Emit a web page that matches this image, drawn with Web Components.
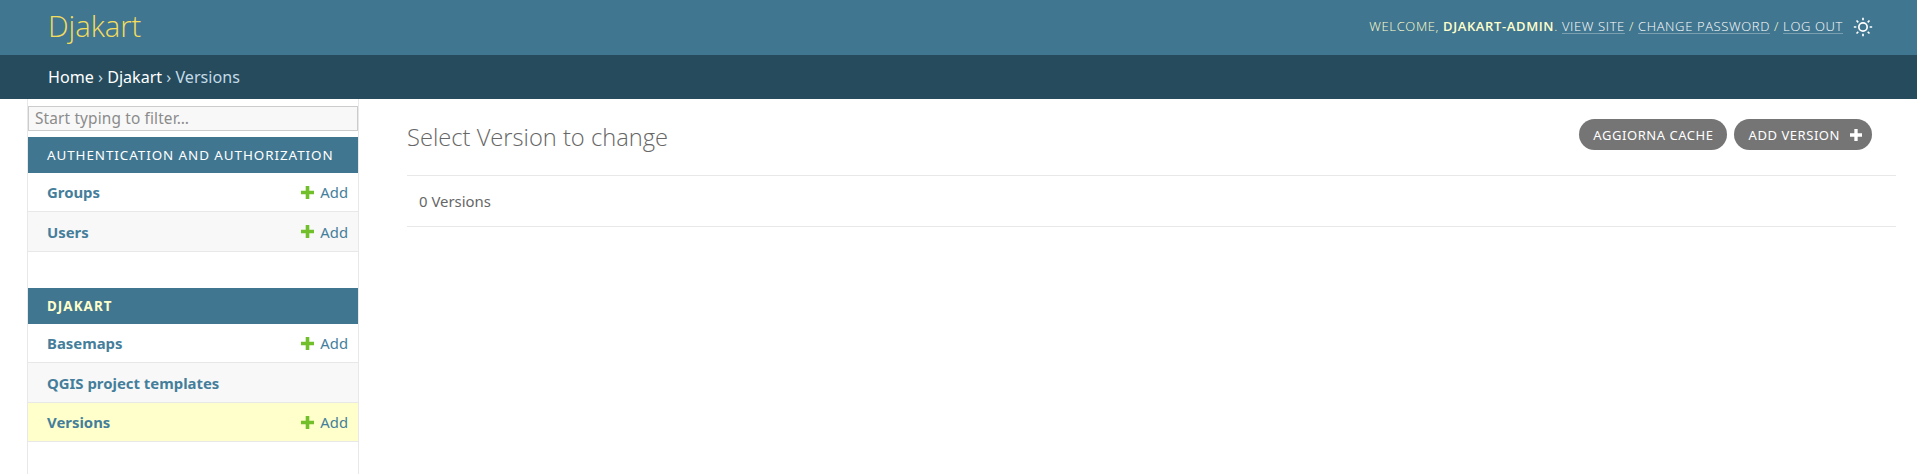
<!DOCTYPE html>
<html lang="en">
<head>
<meta charset="utf-8">
<title>Select Version to change</title>
<style>
  html, body { margin: 0; padding: 0; background: #fff; }
  body { font-family: "Noto Sans", "Open Sans", sans-serif; color: #333; height: 474px; overflow: hidden; }
</style>
</head>
<body>
<site-header brand="Djakart">
  <span>Welcome, <strong>djakart-admin</strong>.</span>
  <a href="#">View site</a> / <a href="#">Change password</a> / <a href="#">Log out</a>
</site-header>
<bread-crumbs><a href="#">Home</a> › <a href="#">Djakart</a> › Versions</bread-crumbs>
<admin-main>
  <nav-sidebar slot="side">
    <app-module caption="Authentication and Authorization">
      <model-row add>Groups</model-row>
      <model-row add alt>Users</model-row>
    </app-module>
    <app-module caption="Djakart" current>
      <model-row add>Basemaps</model-row>
      <model-row alt>QGIS project templates</model-row>
      <model-row add current>Versions</model-row>
    </app-module>
  </nav-sidebar>
  <change-list title-text="Select Version to change" count="0 Versions">
    <tool-button slot="tools">Aggiorna cache</tool-button>
    <tool-button slot="tools" plus>Add Version</tool-button>
  </change-list>
</admin-main>

<script>
// small helper, every element gets an open shadow root
function shadow(el, html) {
  const root = el.attachShadow({ mode: 'open' });
  root.innerHTML = html;
  return root;
}

const PLUS = `<svg width="13" height="13" viewBox="0 0 13 13" aria-hidden="true"><path fill="currentColor" d="M4.7 0h3.6v4.7H13v3.6H8.3V13H4.7V8.3H0V4.7h4.7z"/></svg>`;

class SiteHeader extends HTMLElement {
  connectedCallback() {
    shadow(this, `
      <style>
        :host { display: flex; justify-content: space-between; align-items: center; box-sizing: border-box; height: 55px; padding: 0 44px 0 48px; background: #417690; }
        .brand { font-family: "Open Sans", sans-serif; font-size: 29.2px; font-weight: 300; color: #f5dd5d; line-height: 1; position: relative; top: -1px; }
        .tools { display: flex; align-items: center; font-family: "Open Sans", sans-serif; font-size: 13px; font-weight: 300; letter-spacing: .63px; text-transform: uppercase; color: #ffc; }
        .text { margin-bottom: 3px; }
        .sun { width: 20px; height: 20px; margin: -1px 0 0 10px; color: #fff; display: block; }
      </style>
      <div class="brand">${this.getAttribute('brand')}</div>
      <div class="tools">
        <span class="text"><slot></slot></span>
        <svg class="sun" viewBox="0 0 24 24" aria-hidden="true"><path fill="currentColor" d="M12 18a6 6 0 1 1 0-12 6 6 0 0 1 0 12zm0-2a4 4 0 1 0 0-8 4 4 0 0 0 0 8zM11 1h2v3h-2V1zm0 19h2v3h-2v-3zM3.515 4.929l1.414-1.414L7.05 5.636 5.636 7.05 3.515 4.93zM16.95 18.364l1.414-1.414 2.121 2.121-1.414 1.414-2.121-2.121zm2.121-14.85l1.414 1.415-2.121 2.121-1.414-1.414 2.121-2.121zM5.636 16.95l1.414 1.414-2.121 2.121-1.414-1.414 2.121-2.121zM23 11v2h-3v-2h3zM4 11v2H1v-2h3z"/></svg>
      </div>
    `);
    for (const a of this.querySelectorAll('a')) {
      a.style.cssText = 'color:#fff;text-decoration:underline;text-decoration-color:rgba(255,255,255,.3);text-decoration-thickness:1px;text-underline-offset:2px;text-decoration-skip-ink:none';
    }
    this.querySelector('strong').style.cssText = 'font-weight:600';
  }
}
customElements.define('site-header', SiteHeader);

class BreadCrumbs extends HTMLElement {
  connectedCallback() {
    shadow(this, `
      <style>
        :host { display: flex; align-items: center; box-sizing: border-box; height: 44px; padding-left: 48px; background: #264b5d; color: #c4dce8; font-size: 16.1px; }
      </style>
      <div><slot></slot></div>
    `);
    for (const a of this.querySelectorAll('a')) {
      a.style.cssText = 'color:#fff;text-decoration:none';
    }
  }
}
customElements.define('bread-crumbs', BreadCrumbs);

class AdminMain extends HTMLElement {
  connectedCallback() {
    shadow(this, `
      <style>
        :host { display: flex; padding-left: 27px; height: 375px; }
        .content { flex: 1; min-width: 0; }
      </style>
      <slot name="side"></slot>
      <div class="content"><slot></slot></div>
    `);
  }
}
customElements.define('admin-main', AdminMain);

class NavSidebar extends HTMLElement {
  connectedCallback() {
    shadow(this, `
      <style>
        :host { display: block; box-sizing: border-box; width: 332px; border: solid #e8e8e8; border-width: 0 1px; flex: none; }
        input { display: block; box-sizing: border-box; width: 330px; height: 25px; margin: 7px 0 6px; padding: 0 6px; border: 1px solid #ccc; background: #f8f8f8; font: 15.4px "Noto Sans", sans-serif; letter-spacing: .14px; color: #333; outline: 0; }
        input::placeholder { color: #8b8b8b; opacity: 1; }
      </style>
      <input type="text" placeholder="Start typing to filter…">
      <slot></slot>
    `);
  }
}
customElements.define('nav-sidebar', NavSidebar);

class AppModule extends HTMLElement {
  connectedCallback() {
    const cur = this.hasAttribute('current');
    shadow(this, `
      <style>
        :host { display: block; margin-bottom: 36px; }
        .cap { box-sizing: border-box; height: 36px; padding-left: 19px; display: flex; align-items: center; background: #417690; color: ${cur ? '#ffc' : '#fff'}; font-size: 13.4px; font-weight: ${cur ? 700 : 400}; letter-spacing: ${cur ? '1.05px' : '.94px'}; text-transform: uppercase; white-space: nowrap; }
      </style>
      <div class="cap">${this.getAttribute('caption')}</div>
      <slot></slot>
    `);
  }
}
customElements.define('app-module', AppModule);

class ModelRow extends HTMLElement {
  connectedCallback() {
    shadow(this, `
      <style>
        :host { display: flex; justify-content: space-between; align-items: center; box-sizing: border-box; height: 39px; padding: 0 10px 0 19px; border-bottom: 1px solid #e8e8e8; background: #fff; color: #447e9b; }
        :host([alt]) { background: #f8f8f8; height: 40px; }
        :host([current]) { background: #ffc; }
        .name { font-size: 14.9px; font-weight: 700; }
        .add { display: inline-flex; align-items: center; gap: 6px; font-size: 14.8px; }
        .add svg { color: #70bf2b; display: block; }
      </style>
      <span class="name"><slot></slot></span>
      ${this.hasAttribute('add') ? `<span class="add">${PLUS}<span>Add</span></span>` : ''}
    `);
  }
}
customElements.define('model-row', ModelRow);

class ToolButton extends HTMLElement {
  connectedCallback() {
    const plus = this.hasAttribute('plus');
    shadow(this, `
      <style>
        :host { display: inline-flex; align-items: center; gap: 10px; box-sizing: border-box; height: 31px; padding: 0 ${plus ? '10px' : '13px'} 0 ${plus ? '15px' : '14px'}; border-radius: 15.5px; background: #757575; color: #fff; font-size: 13px; letter-spacing: .55px; text-transform: uppercase; white-space: nowrap; }
        svg { display: block; width: 12px; height: 12px; }
      </style>
      <slot></slot>${plus ? PLUS : ''}
    `);
  }
}
customElements.define('tool-button', ToolButton);

class ChangeList extends HTMLElement {
  connectedCallback() {
    shadow(this, `
      <style>
        :host { display: block; padding: 0 21px 0 48px; }
        .top { display: flex; justify-content: space-between; align-items: flex-start; height: 76px; border-bottom: 1px solid #e8e8e8; }
        h1 { margin: 22px 0 0; font-family: "Open Sans", sans-serif; font-size: 23.7px; font-weight: 300; color: #666; line-height: 32px; }
        .tools { display: flex; gap: 7px; margin: 20px 24px 0 0; }
        .count { box-sizing: border-box; height: 51px; display: flex; align-items: center; padding-left: 12px; border-bottom: 1px solid #e8e8e8; font-size: 14.9px; color: #666; }
      </style>
      <div class="top">
        <h1>${this.getAttribute('title-text')}</h1>
        <div class="tools"><slot name="tools"></slot></div>
      </div>
      <div class="count">${this.getAttribute('count')}</div>
    `);
  }
}
customElements.define('change-list', ChangeList);
</script>
</body>
</html>
